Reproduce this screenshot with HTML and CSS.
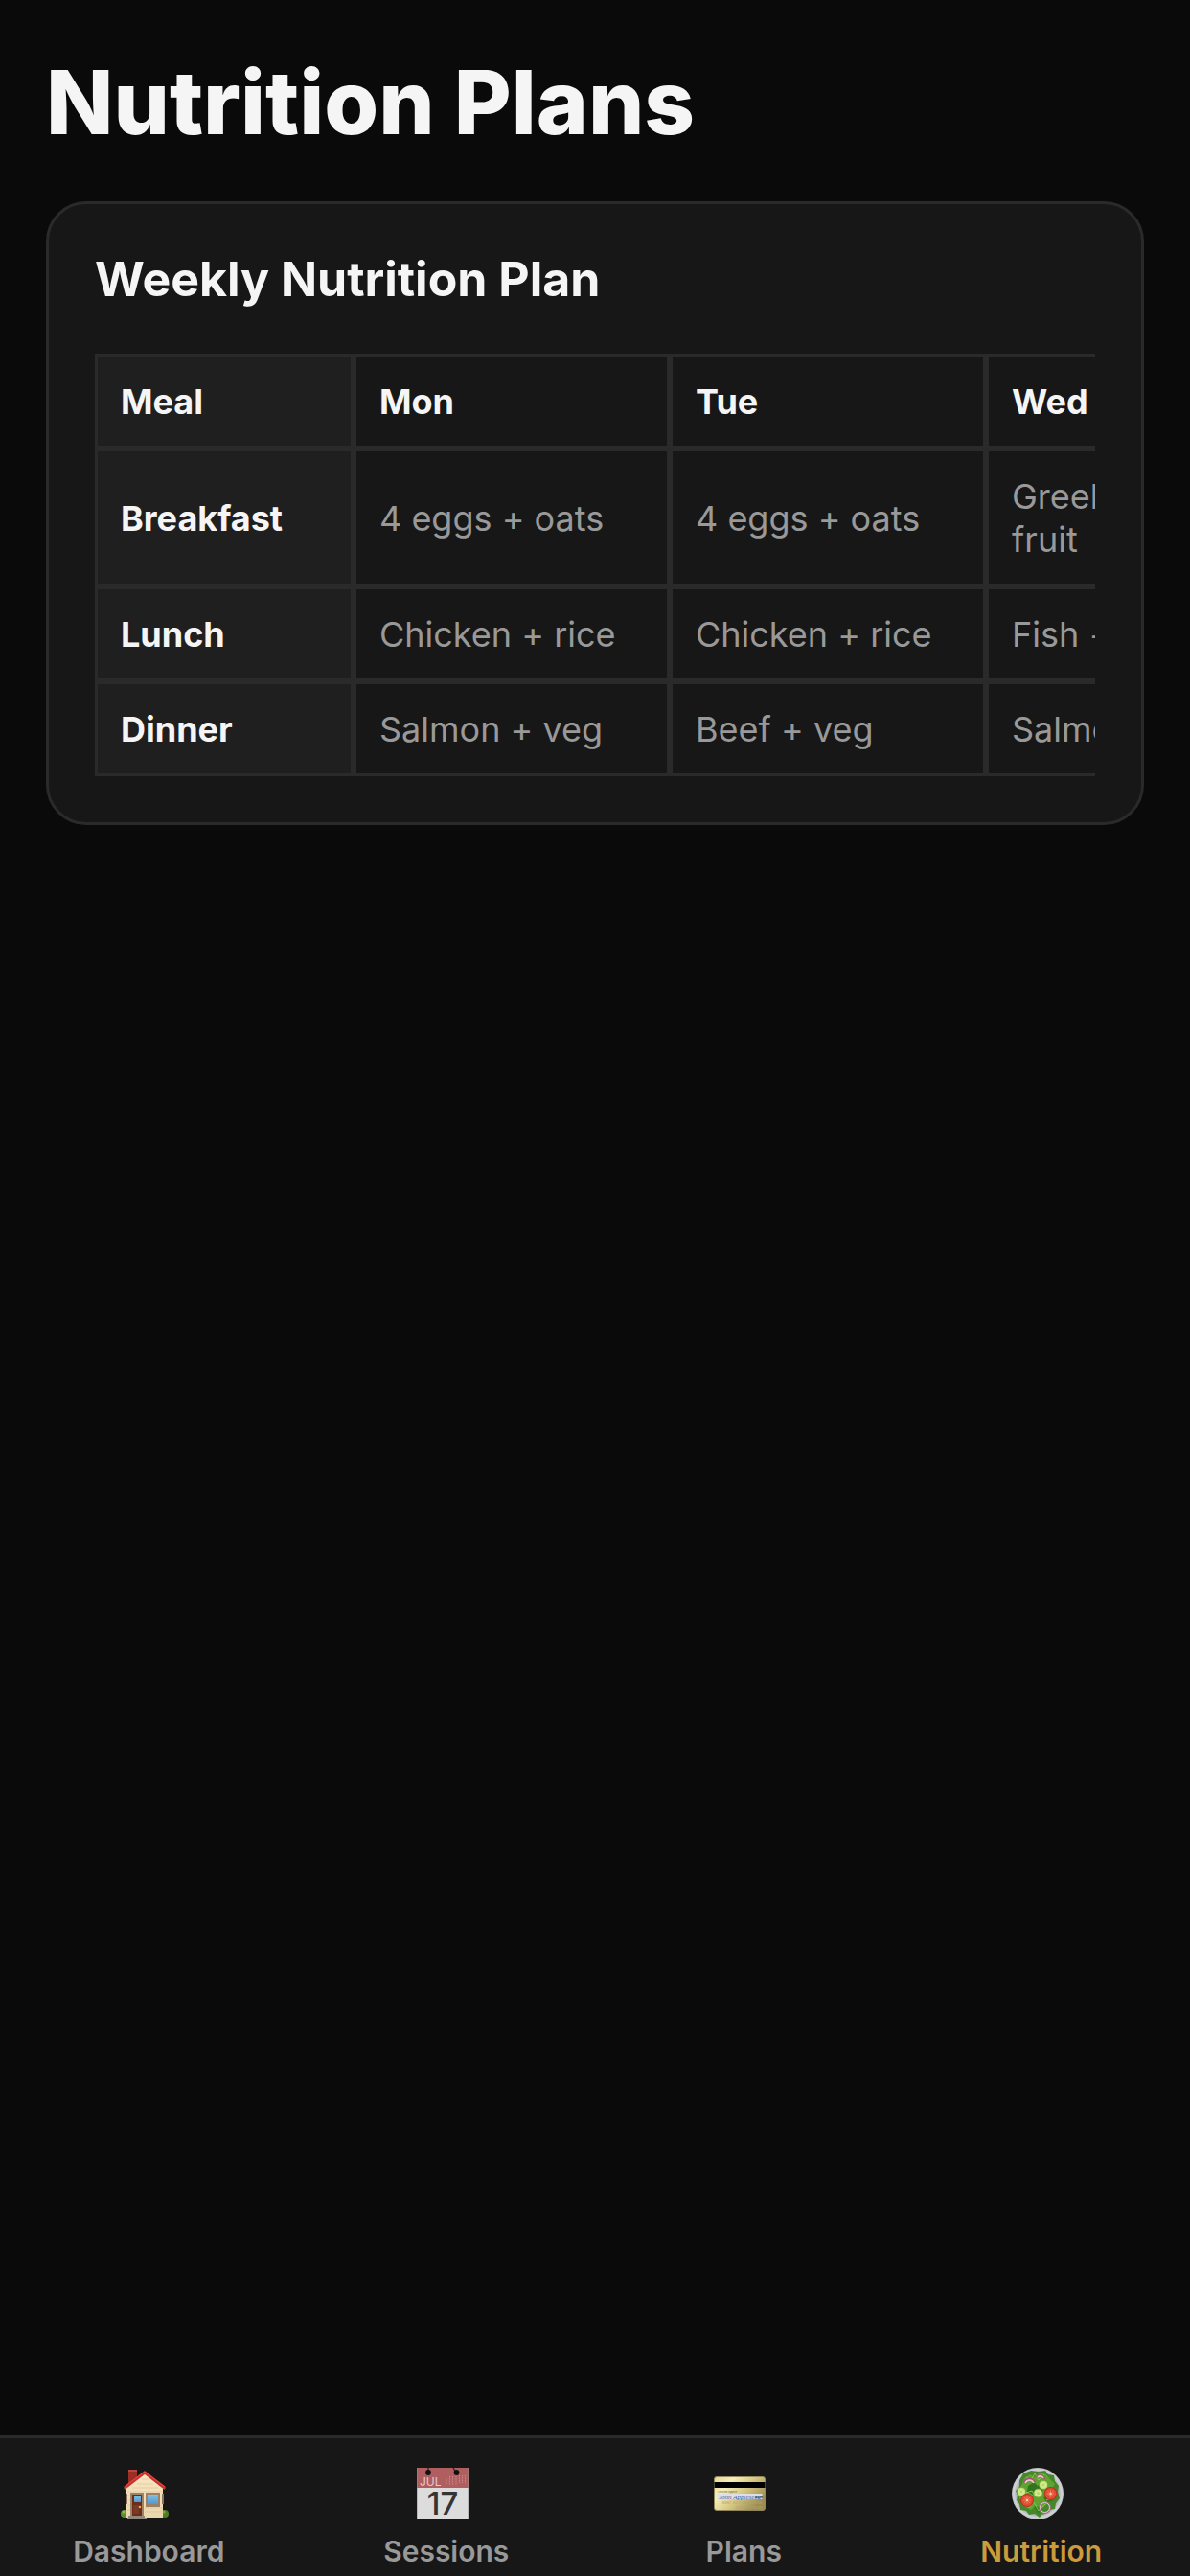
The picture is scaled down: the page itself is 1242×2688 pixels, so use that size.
FILE: index.html
```html
<!DOCTYPE html>
<html lang="en">
<head>
    <meta charset="UTF-8">
    <meta name="viewport" content="width=device-width, initial-scale=1.0">
    <title>Nutrition Plans</title>
    <link rel="stylesheet" href="styles.css">
</head>
<body>
    <main class="page">
        <h1 class="page-title">Nutrition Plans</h1>
        <section class="card">
            <h2 class="card-title">Weekly Nutrition Plan</h2>
            <div class="table-scroll">
                <table class="plan-table">
                    <thead>
                        <tr>
                            <th class="meal" scope="col">Meal</th>
                            <th scope="col">Mon</th>
                            <th scope="col">Tue</th>
                            <th scope="col">Wed</th>
                        </tr>
                    </thead>
                    <tbody>
                        <tr>
                            <th class="meal" scope="row">Breakfast</th>
                            <td>4 eggs + oats</td>
                            <td>4 eggs + oats</td>
                            <td>Greek yogurt + fruit</td>
                        </tr>
                        <tr>
                            <th class="meal" scope="row">Lunch</th>
                            <td>Chicken + rice</td>
                            <td>Chicken + rice</td>
                            <td>Fish + rice</td>
                        </tr>
                        <tr>
                            <th class="meal" scope="row">Dinner</th>
                            <td>Salmon + veg</td>
                            <td>Beef + veg</td>
                            <td>Salmon + veg</td>
                        </tr>
                    </tbody>
                </table>
            </div>
        </section>
    </main>

    <nav class="tab-bar">
        <a class="tab" href="#dashboard">
            <svg class="tab-icon" viewBox="0 0 54 54" aria-hidden="true">
                <defs>
                    <linearGradient id="wall" x1="0" y1="0" x2="0" y2="1">
                        <stop offset="0" stop-color="#f8e6c4"/>
                        <stop offset="1" stop-color="#ead7ac"/>
                    </linearGradient>
                    <linearGradient id="glass" x1="0" y1="0" x2="0" y2="1">
                        <stop offset="0" stop-color="#80c4ea"/>
                        <stop offset="1" stop-color="#5598cc"/>
                    </linearGradient>
                </defs>
                <circle cx="6" cy="48" r="4" fill="#5f8f2b"/>
                <circle cx="48" cy="48" r="4" fill="#4f7d24"/>
                <circle cx="5" cy="46" r="1.5" fill="#8cba4c"/>
                <circle cx="47" cy="46" r="1.5" fill="#7dab40"/>
                <path d="M10 2h9v8l-9 8z" fill="#9c2e26"/>
                <path d="M10 2h9v2h-9z" fill="#b8483c"/>
                <path d="M8 21 27 5l19 16v31H8z" fill="url(#wall)"/>
                <path d="M9 25h37M9 29h4M9 34h4M9 39h4M9 44h4M27 42h19M27 46h19M19 17h17M24 12h7M14 21h27" stroke="#d9c093" stroke-width=".6"/>
                <path d="M7 27h2v11H7zM45 27h2v11h-2z" fill="#8c735a"/>
                <path d="M12 26h14v25H12z" fill="#a08269"/>
                <path d="M14 28h10v22H14z" fill="#6a2f1c"/>
                <path d="M16 29h7v7h-7z" fill="url(#glass)"/>
                <path d="M15 39h6v9h-6z" fill="#793b25"/>
                <circle cx="22" cy="41" r="1.3" fill="#e5a84b"/>
                <path d="M28 26h15v15H28z" fill="#9c8067"/>
                <path d="M30 28h11v10H30z" fill="url(#glass)"/>
                <path d="M10 50h17v2h2v1H9v-1h1z" fill="#91877b"/>
                <path d="m6 22 21-17 21 17" fill="none" stroke="#a87962" stroke-width="2"/>
                <path d="M5 20 27 3l22 17-1.500 2.500L27 7 6.500 22.500z" fill="#cc302d"/>
                <path d="M6 20 27 4l21 16" fill="none" stroke="#e45042" stroke-width="1"/>
            </svg>
            <span class="tab-label">Dashboard</span>
        </a>
        <a class="tab" href="#sessions">
            <svg class="tab-icon" viewBox="0 0 54 54" aria-hidden="true">
                <path d="M0 0h54v54H0z" fill="#929692"/>
                <path d="M.5 0h53v21H.5z" fill="#b05e5f"/>
                <path d="M.5 21h53v32.500H.5z" fill="#dcdcdc"/>
                <path d="M12 0v5M38 0l3 5" stroke="#222" stroke-width="1.200"/>
                <circle cx="12" cy="5" r="2.900" fill="#111"/>
                <circle cx="41.500" cy="5" r="2.900" fill="#111"/>
                <text class="cal-month" x="3" y="18.500">JUL</text>
                <path d="M31 11v7M34.500 9v9M37.500 9v9M41 9v9M44.500 8v8M47.500 8v8M50.500 8v8" stroke="#cd8d8d" stroke-width="1" stroke-dasharray="1 .7"/>
                <text class="cal-day" x="27" y="48.500">17</text>
            </svg>
            <span class="tab-label">Sessions</span>
        </a>
        <a class="tab" href="#plans">
            <svg class="tab-icon" viewBox="0 0 54 54" aria-hidden="true">
                <defs>
                    <linearGradient id="gold" x1="0" y1="0" x2="1" y2="0.600">
                        <stop offset="0" stop-color="#e5d692"/>
                        <stop offset=".3" stop-color="#f6efbb"/>
                        <stop offset=".6" stop-color="#d8ca85"/>
                        <stop offset="1" stop-color="#9e8d52"/>
                    </linearGradient>
                </defs>
                <rect x=".5" y="9.500" width="53" height="35" rx="2.500" fill="url(#gold)" stroke="#91865e"/>
                <path d="M.5 15h53v6H.5z" fill="#000"/>
                <path d="M3.500 27h47v6h-47z" fill="#dedfe3"/>
                <text class="card-note" x="4" y="25.500">Authorized Signature</text>
                <text class="card-sign" x="5" y="32.500">John Appleseed</text>
                <text class="card-code" x="43" y="32">408</text>
                <text class="card-number" x="50.500" y="38">8997 4271 0083 2438</text>
                <text class="card-number" x="50.500" y="43">02/27/14 8046</text>
            </svg>
            <span class="tab-label">Plans</span>
        </a>
        <a class="tab active" href="#nutrition" aria-current="page">
            <svg class="tab-icon" viewBox="0 0 54 54" aria-hidden="true">
                <defs>
                    <radialGradient id="plate">
                        <stop offset=".8" stop-color="#a8aaaa"/>
                        <stop offset=".92" stop-color="#d0d4d7"/>
                        <stop offset="1" stop-color="#bcc0c2"/>
                    </radialGradient>
                    <g id="cucumber">
                        <circle r="4.800" fill="#80ae36"/>
                        <circle r="4.100" fill="#c9e581"/>
                        <circle r="2.500" fill="#e1f2a0"/>
                        <path d="M0-2v4M-2 0h4M-1.400-1.400l2.800 2.800M1.400-1.400l-2.800 2.800" stroke="#b1d268" stroke-width=".7"/>
                    </g>
                    <g id="tomato">
                        <circle r="7" fill="#bd2e23"/>
                        <circle r="6" fill="#e24c35"/>
                        <path d="M0-4v8M-4 0h8M-3-3l6 6M3-3l-6 6" stroke="#f07a58" stroke-width="1"/>
                        <circle r="1.200" fill="#ffd0a5"/>
                    </g>
                </defs>
                <circle cx="27" cy="27" r="27" fill="url(#plate)"/>
                <path d="m8 13 4-7 8-3 8 1 7-1 3 4 6 1 1 6 4 5-1 6 2 7-4 5-1 6-6 1-4 4-4 1-2 3-5-4-6 1-3-4-6-1-1-6-3-4 1-5-2-5 4-4z" fill="#458829"/>
                <path d="m13 11 6-4 5 3 5-5 7 2 4 5 5 5-4 6 3 6-4 6-8 7-7-2-5 4-7-4-5-8-1-9 4-6z" fill="#5fa433"/>
                <path d="m17 19 6-4 4 4 5-4 2 6-5 8-7-1-6-3zM10 31l7-4 4 6-4 7zM33 31l8-4 2 7-6 3zM23 40l7 2-2 6z" fill="#34741f"/>
                <path d="m15 10 5 3 4-7 4 7 6-6M9 22l6 4 6-2 3 5 5-6M18 42l5-6 5 9 7-7M35 27l9 4-8 3" fill="none" stroke="#86c44d" stroke-width="1"/>
                <path d="M13 16c1-5 8-6 11-1M26 10c2-3 7-2 8 2" fill="none" stroke="#a35674" stroke-width="2.400"/>
                <path d="M14 16c2-4 7-4 9 0M27 10c2-2 5-1 6 1" fill="none" stroke="#efc9ce" stroke-width="1.600"/>
                <use href="#cucumber" x="10" y="25"/>
                <use href="#cucumber" x="33" y="18"/>
                <use href="#cucumber" x="27.500" y="26.500"/>
                <use href="#tomato" x="16" y="34"/>
                <use href="#tomato" x="40.500" y="27"/>
                <circle cx="34.500" cy="41.500" r="5.500" fill="none" stroke="#a86f83" stroke-width="2"/>
                <circle cx="34.500" cy="41.500" r="5" fill="none" stroke="#dfced0" stroke-width="1"/>
            </svg>
            <span class="tab-label">Nutrition</span>
        </a>
    </nav>
</body>
</html>
```

FILE: styles.css
```css
* {
    box-sizing: border-box;
    margin: 0;
    padding: 0;
}
body {
    min-height: 100vh;
    display: flex;
    flex-direction: column;
    background: #0a0a0a;
    color: #f5f5f5;
    font-family: Inter, "Liberation Sans", sans-serif;
}
.page {
    flex: 1;
    min-width: 0;
    padding: 48px;
}
.page-title {
    margin-bottom: 44px;
    font-size: 92px;
    line-height: 118px;
    font-weight: 800;
}
.card {
    padding: 48px;
    background: #171717;
    border: 3px solid #2a2a2a;
    border-radius: 42px;
}
.card-title {
    margin-bottom: 48px;
    font-size: 50px;
    line-height: 60px;
    font-weight: 700;
}

/* weekly table, scrolls sideways on narrow screens */
.table-scroll {
    overflow-x: auto;
    scrollbar-width: none;
}
.plan-table {
    width: 1260px;
    table-layout: fixed;
    border-collapse: separate;
    border-spacing: 0;
    font-size: 36px;
    line-height: 45px;
}
.plan-table th,
.plan-table td {
    width: 330px;
    padding: 25px 24px 23px;
    border: 3px solid #2a2a2a;
    text-align: left;
    vertical-align: middle;
}
.plan-table th {
    font-weight: 700;
}
.plan-table td {
    color: #999;
}
.plan-table .meal {
    width: 270px;
    background: #1f1f1f;
}

/* bottom navigation */
.tab-bar {
    position: sticky;
    bottom: 0;
    display: grid;
    grid-template-columns: repeat(4, 1fr);
    padding: 31px 0 8px;
    background: #171717;
    border-top: 3px solid #2a2a2a;
}
.tab {
    display: flex;
    flex-direction: column;
    align-items: center;
    gap: 15px;
    color: #999;
    text-decoration: none;
}
.tab.active {
    color: #cb9b3c;
}
.tab-icon {
    width: 62px;
    height: 54px;
    padding-right: 8px;
}
.tab-label {
    font-size: 30px;
    line-height: 36px;
    font-weight: 600;
}

/* lettering on the icons */
.cal-month {
    font-size: 12px;
    fill: #e2cccc;
}
.cal-day {
    font-size: 33px;
    font-weight: 500;
    text-anchor: middle;
    fill: #343434;
}
.card-note {
    font-size: 2px;
    fill: #655c37;
}
.card-sign {
    font-family: "Liberation Serif", serif;
    font-size: 7px;
    font-style: italic;
    fill: #3c65ad;
}
.card-code {
    font-size: 4px;
    font-weight: 700;
    fill: #333;
}
.card-number {
    font-size: 4px;
    text-anchor: end;
    fill: #b2a66e;
}
```
